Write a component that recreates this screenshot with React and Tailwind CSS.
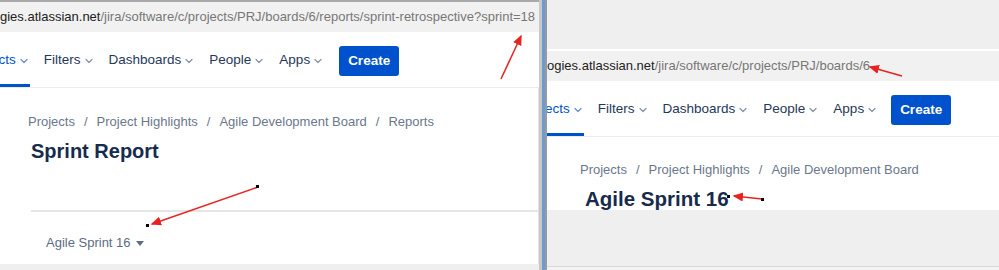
import { ChevronDown } from "lucide-react";

const font = { fontFamily: '"Liberation Sans", Arial, sans-serif' };

const NavItem = ({ label }) => (
  <div className="ml-[14px] flex items-center gap-[2px]">
    <span className="text-[#253858]">{label}</span>
    <ChevronDown className="h-3 w-3 text-[#8993a4]" strokeWidth={2.5} />
  </div>
);

const Nav = ({ shift, createGap }) => (
  <div className="flex h-[54px] shrink-0 items-center border-b border-[#ebecf0] bg-white text-[13.5px]">
    <div className={`flex items-center gap-[2px] self-stretch border-b-[3px] border-[#0052cc] pt-[3px] ${shift}`}>
      <span className="text-[#0052cc]">ects</span>
      <ChevronDown className="h-3 w-3 text-[#6b8fd1]" strokeWidth={2.5} />
    </div>
    <NavItem label="Filters" />
    <NavItem label="Dashboards" />
    <NavItem label="People" />
    <NavItem label="Apps" />
    <button className={`mt-[1px] h-[30px] w-[60px] rounded-[3px] bg-[#0052cc] text-[13.5px] font-bold text-white ${createGap}`}>
      Create
    </button>
  </div>
);

const UrlBar = ({ host, path }) => (
  <div className="flex h-[30px] shrink-0 items-center overflow-hidden whitespace-nowrap bg-[#f1f1f1] text-[13px]">
    <span className="text-[#222]">{host}</span>
    <span className="text-[#777]">{path}</span>
  </div>
);

const Crumbs = ({ items }) => (
  <div className="flex h-[20px] items-center text-[13px] text-[#6b778c]">
    {items.map((item, i) => (
      <div className="flex items-center" key={item}>
        {i > 0 && <span className="mx-[9px]">/</span>}
        <span>{item}</span>
      </div>
    ))}
  </div>
);

export default function App() {
  return (
    <div className="relative flex h-[270px] w-[999px] overflow-hidden bg-[#efefef]" style={font}>
      {/* left window */}
      <div className="flex w-[539px] flex-col overflow-hidden border-t-2 border-[#a9a9a9] bg-white">
        <UrlBar
          host="gies.atlassian.net"
          path="/jira/software/c/projects/PRJ/boards/6/reports/sprint-retrospective?sprint=18"
        />
        <div className="h-[2px] shrink-0 bg-white" />
        <Nav shift="ml-[-9px]" createGap="ml-[15px]" />
        <div className="flex flex-1 flex-col border-r border-[#e0e0e0] pl-[28px]">
          <div className="mt-[24px]">
            <Crumbs items={["Projects", "Project Highlights", "Agile Development Board", "Reports"]} />
          </div>
          <h1 className="ml-[3px] mt-[5px] h-[28px] text-[20px] leading-[28px] font-bold text-[#172b4d]">
            Sprint Report
          </h1>
          <div className="ml-[3px] mt-[45px] border-t-2 border-[#e6e6e6]" />
          <div className="ml-[18px] mt-[21px] flex h-[20px] items-center gap-[5px] text-[13px] text-[#5e6c84]">
            <span>Agile Sprint 16</span>
            <span className="h-0 w-0 border-x-[4px] border-t-[5px] border-x-transparent border-t-[#5e6c84]" />
          </div>
        </div>
        <div className="h-[6px] shrink-0 bg-[#efefef]" />
      </div>

      {/* window frame */}
      <div className="w-[3px] bg-[#c8c8c8]" />
      <div className="w-[3px] bg-[#6b9bd1]" />
      <div className="w-[2px] bg-[#9a9a9a]" />

      {/* right window */}
      <div className="flex flex-1 flex-col overflow-hidden">
        <div className="h-[49px] shrink-0 bg-[#efefef]" />
        <div className="h-[2px] shrink-0 bg-white" />
        <UrlBar host="ogies.atlassian.net" path="/jira/software/c/projects/PRJ/boards/6" />
        <div className="h-[2px] shrink-0 bg-white" />
        <Nav shift="ml-[-2px]" createGap="ml-[13px]" />
        <div className="flex h-[73px] shrink-0 flex-col overflow-hidden bg-white pl-[33px]">
          <div className="mt-[23px]">
            <Crumbs items={["Projects", "Project Highlights", "Agile Development Board"]} />
          </div>
          <h1 className="ml-[5px] mt-[4px] h-[30px] text-[20.5px] leading-[30px] font-bold text-[#172b4d]">
            Agile Sprint 16
          </h1>
        </div>
        <div className="flex-1 bg-[#efefef]" />
        <div className="h-[4px] shrink-0 border-t border-[#d8d8d8] bg-[#f3f3f3]" />
      </div>

      {/* annotations */}
      <svg className="pointer-events-none absolute left-0 top-0" width="999" height="270">
        <defs>
          <marker id="head" markerWidth="8" markerHeight="8" refX="6" refY="4" orient="auto">
            <path d="M0,1 L7,4 L0,7 Z" fill="#e8231f" />
          </marker>
        </defs>
        <line x1="501" y1="79" x2="521" y2="36" stroke="#e8231f" strokeWidth="1.5" markerEnd="url(#head)" />
        <line x1="258" y1="187" x2="152" y2="224" stroke="#e8231f" strokeWidth="1.5" markerEnd="url(#head)" />
        <rect x="256" y="185" width="3" height="3" fill="#000" />
        <rect x="146" y="224" width="3" height="3" fill="#000" />
        <line x1="902" y1="76" x2="870" y2="67" stroke="#e8231f" strokeWidth="1.5" markerEnd="url(#head)" />
        <line x1="762" y1="199" x2="734" y2="196" stroke="#e8231f" strokeWidth="1.5" markerEnd="url(#head)" />
        <rect x="761" y="198" width="3" height="3" fill="#000" />
        <rect x="727" y="195" width="3" height="3" fill="#000" />
      </svg>
    </div>
  );
}
